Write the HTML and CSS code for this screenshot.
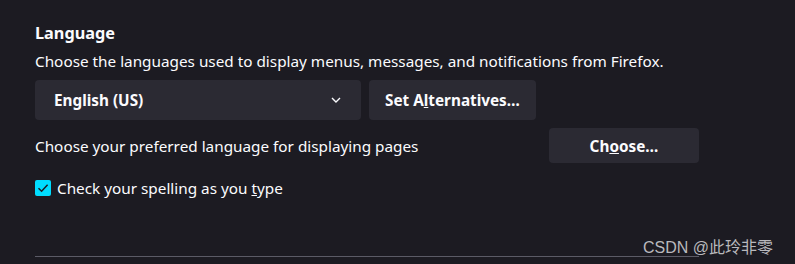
FILE: index.html
```html
<!DOCTYPE html>
<html lang="en">
<head>
    <meta charset="UTF-8">
    <title>Language</title>
    <link rel="stylesheet" href="styles.css">
</head>
<body>
    <section class="pane">
        <h2 class="pane-title">Language</h2>
        <p class="pane-desc">Choose the languages used to display menus, messages, and notifications from Firefox.</p>

        <div class="ui-row">
            <div class="dropdown">
                <span class="dropdown-label">English (US)</span>
                <svg class="chevron" width="10" height="6" viewBox="0 0 10 6">
                    <path d="M1 1 L5 5 L9 1" fill="none" stroke="#fbfbfe" stroke-width="1.4"/>
                </svg>
            </div>
            <button class="btn">Set A<u>l</u>ternatives…</button>
        </div>

        <div class="ui-row spread">
            <span class="row-text">Choose your preferred language for displaying pages</span>
            <button class="btn btn-wide">Ch<u>o</u>ose…</button>
        </div>

        <label class="check-row">
            <span class="checkbox">
                <svg width="16" height="16" viewBox="0 0 16 16">
                    <path d="M3.5 8.2 L6.6 11.2 L12.6 4.8" fill="none" stroke="#1c1b22" stroke-width="1.5"/>
                </svg>
            </span>
            <span>Check your spelling as you <u>t</u>ype</span>
        </label>

        <hr class="divider">
    </section>

    <div class="watermark">CSDN @此玲非零</div>
</body>
</html>
```

FILE: styles.css
```css
:root {
    --bg: #1c1b22;
    --btn-bg: #2b2a33;
    --text: #fbfbfe;
    --accent: #00ddff;
}

body {
    margin: 0;
    background: var(--bg);
    color: var(--text);
    font-family: 'Noto Sans', sans-serif;
    font-size: 15.3px;
    height: 264px;
    overflow: hidden;
}

.pane {
    width: 664px;
    padding: 21px 0 0 35px;
}

.pane-title {
    margin: 0;
    font-size: 16.3px;
    font-weight: 700;
    line-height: 24px;
}

.pane-desc {
    margin: 5px 0 0;
    line-height: 22px;
}

.ui-row {
    display: flex;
    align-items: center;
    gap: 8px;
    margin-top: 8px;
}

.ui-row.spread {
    justify-content: space-between;
}

.dropdown {
    width: 326px;
    height: 40px;
    box-sizing: border-box;
    padding: 0 20px 0 19px;
    display: flex;
    align-items: center;
    justify-content: space-between;
    background: var(--btn-bg);
    border-radius: 4px;
    font-weight: 700;
}

.btn {
    height: 40px;
    padding: 0 16px;
    border: none;
    border-radius: 4px;
    background: var(--btn-bg);
    color: var(--text);
    font: 700 15.3px 'Noto Sans', sans-serif;
}

.btn-wide {
    width: 150px;
    height: 35px;
}

.check-row {
    display: flex;
    align-items: center;
    gap: 6px;
    margin-top: 15px;
}

.checkbox {
    width: 16px;
    height: 16px;
    border-radius: 2px;
    background: var(--accent);
    display: flex;
}

.divider {
    margin: 58px 0 0;
    border: none;
    height: 1px;
    background: #5b5b66;
}

.watermark {
    position: absolute;
    right: 22px;
    top: 234px;
    font-family: 'Liberation Sans', 'Noto Sans CJK SC', sans-serif;
    font-size: 16px;
    color: #b9b9bd;
}
```
